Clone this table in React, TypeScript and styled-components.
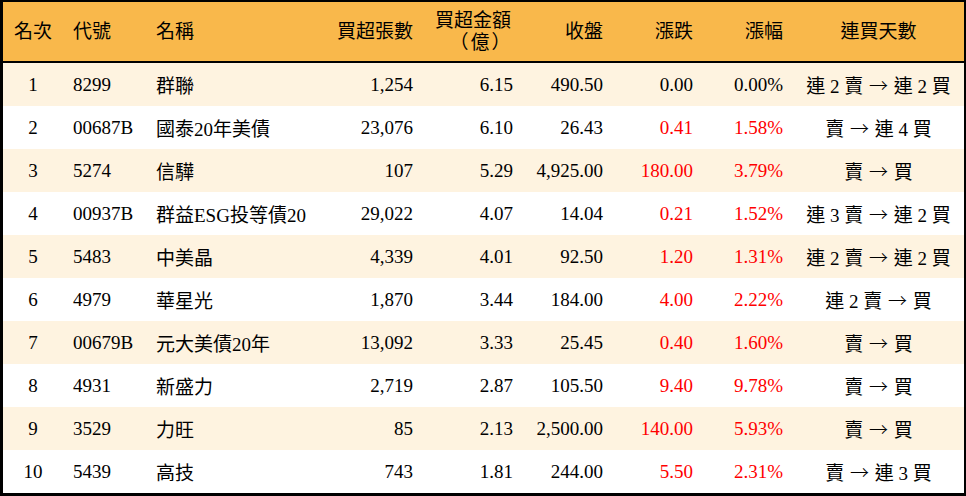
import styled, { createGlobalStyle } from "styled-components";

const GlobalStyle = createGlobalStyle`
  html, body {
    margin: 0;
    padding: 0;
    background: #ffffff;
  }
  body {
    font-family: "Liberation Serif", "Noto Sans CJK TC", serif;
    color: #000000;
  }
`;

const Board = styled.table`
  width: 966px;
  border-collapse: separate;
  border-spacing: 0;
  table-layout: fixed;
  border-top: 2px solid #000;
  border-right: 2px solid #000;
  border-left: 3px solid #000;
  border-bottom: 3px solid #000;
  font-size: 19px;
`;

const HeadRow = styled.tr`
  background-color: #f9b84b;
`;

const HeadCell = styled.th<{ $align?: "left" | "right" | "center" }>`
  height: 59px;
  box-sizing: content-box;
  font-weight: 400;
  padding: 0 10px;
  line-height: 22px;
  text-align: ${(props) => props.$align ?? "left"};
  white-space: nowrap;
  border-bottom: 2px solid #000;
`;

const Unit = styled.span`
  display: block;
  padding-left: 16px;
  letter-spacing: 2px;
`;

const Row = styled.tr<{ $striped: boolean }>`
  background-color: ${(props) => (props.$striped ? "#fef3e0" : "#ffffff")};
`;

const Cell = styled.td<{ $align?: "left" | "right" | "center"; $red?: boolean }>`
  height: 43px;
  padding: 0 10px;
  text-align: ${(props) => props.$align ?? "left"};
  color: ${(props) => (props.$red ? "#ff0000" : "#000000")};
  white-space: nowrap;
`;

const Arrow = styled.span`
  font-family: "Noto Sans CJK TC", sans-serif;
  font-weight: 300;
  margin: 0 1px;
`;

interface IStock {
  code: string;
  name: string;
  lots: string;
  amount: string;
  close: string;
  change: string;
  pct: string;
  streak: string;
}

const stocks: IStock[] = [
  { code: "8299", name: "群聯", lots: "1,254", amount: "6.15", close: "490.50", change: "0.00", pct: "0.00%", streak: "連 2 賣 → 連 2 買" },
  { code: "00687B", name: "國泰20年美債", lots: "23,076", amount: "6.10", close: "26.43", change: "0.41", pct: "1.58%", streak: "賣 → 連 4 買" },
  { code: "5274", name: "信驊", lots: "107", amount: "5.29", close: "4,925.00", change: "180.00", pct: "3.79%", streak: "賣 → 買" },
  { code: "00937B", name: "群益ESG投等債20", lots: "29,022", amount: "4.07", close: "14.04", change: "0.21", pct: "1.52%", streak: "連 3 賣 → 連 2 買" },
  { code: "5483", name: "中美晶", lots: "4,339", amount: "4.01", close: "92.50", change: "1.20", pct: "1.31%", streak: "連 2 賣 → 連 2 買" },
  { code: "4979", name: "華星光", lots: "1,870", amount: "3.44", close: "184.00", change: "4.00", pct: "2.22%", streak: "連 2 賣 → 買" },
  { code: "00679B", name: "元大美債20年", lots: "13,092", amount: "3.33", close: "25.45", change: "0.40", pct: "1.60%", streak: "賣 → 買" },
  { code: "4931", name: "新盛力", lots: "2,719", amount: "2.87", close: "105.50", change: "9.40", pct: "9.78%", streak: "賣 → 買" },
  { code: "3529", name: "力旺", lots: "85", amount: "2.13", close: "2,500.00", change: "140.00", pct: "5.93%", streak: "賣 → 買" },
  { code: "5439", name: "高技", lots: "743", amount: "1.81", close: "244.00", change: "5.50", pct: "2.31%", streak: "賣 → 連 3 買" },
];

function Streak({ text }: { text: string }) {
  const [from, to] = text.split("→");
  return (
    <>
      {from}
      <Arrow>→</Arrow>
      {to}
    </>
  );
}

function App() {
  return (
    <>
      <GlobalStyle />
      <Board>
        <colgroup>
          <col style={{ width: 60 }} />
          <col style={{ width: 83 }} />
          <col style={{ width: 170 }} />
          <col style={{ width: 107 }} />
          <col style={{ width: 100 }} />
          <col style={{ width: 90 }} />
          <col style={{ width: 90 }} />
          <col style={{ width: 90 }} />
          <col style={{ width: 171 }} />
        </colgroup>
        <thead>
          <HeadRow>
            <HeadCell $align="center">名次</HeadCell>
            <HeadCell>代號</HeadCell>
            <HeadCell>名稱</HeadCell>
            <HeadCell $align="right">買超張數</HeadCell>
            <HeadCell $align="center">
              買超金額
              <Unit>（億）</Unit>
            </HeadCell>
            <HeadCell $align="right">收盤</HeadCell>
            <HeadCell $align="right">漲跌</HeadCell>
            <HeadCell $align="right">漲幅</HeadCell>
            <HeadCell $align="center">連買天數</HeadCell>
          </HeadRow>
        </thead>
        <tbody>
          {stocks.map((s, i) => {
            const up = parseFloat(s.change) > 0;
            return (
              <Row key={s.code} $striped={i % 2 === 0}>
                <Cell $align="center">{i + 1}</Cell>
                <Cell>{s.code}</Cell>
                <Cell>{s.name}</Cell>
                <Cell $align="right">{s.lots}</Cell>
                <Cell $align="right">{s.amount}</Cell>
                <Cell $align="right">{s.close}</Cell>
                <Cell $align="right" $red={up}>{s.change}</Cell>
                <Cell $align="right" $red={up}>{s.pct}</Cell>
                <Cell $align="center">
                  <Streak text={s.streak} />
                </Cell>
              </Row>
            );
          })}
        </tbody>
      </Board>
    </>
  );
}

export default App;
